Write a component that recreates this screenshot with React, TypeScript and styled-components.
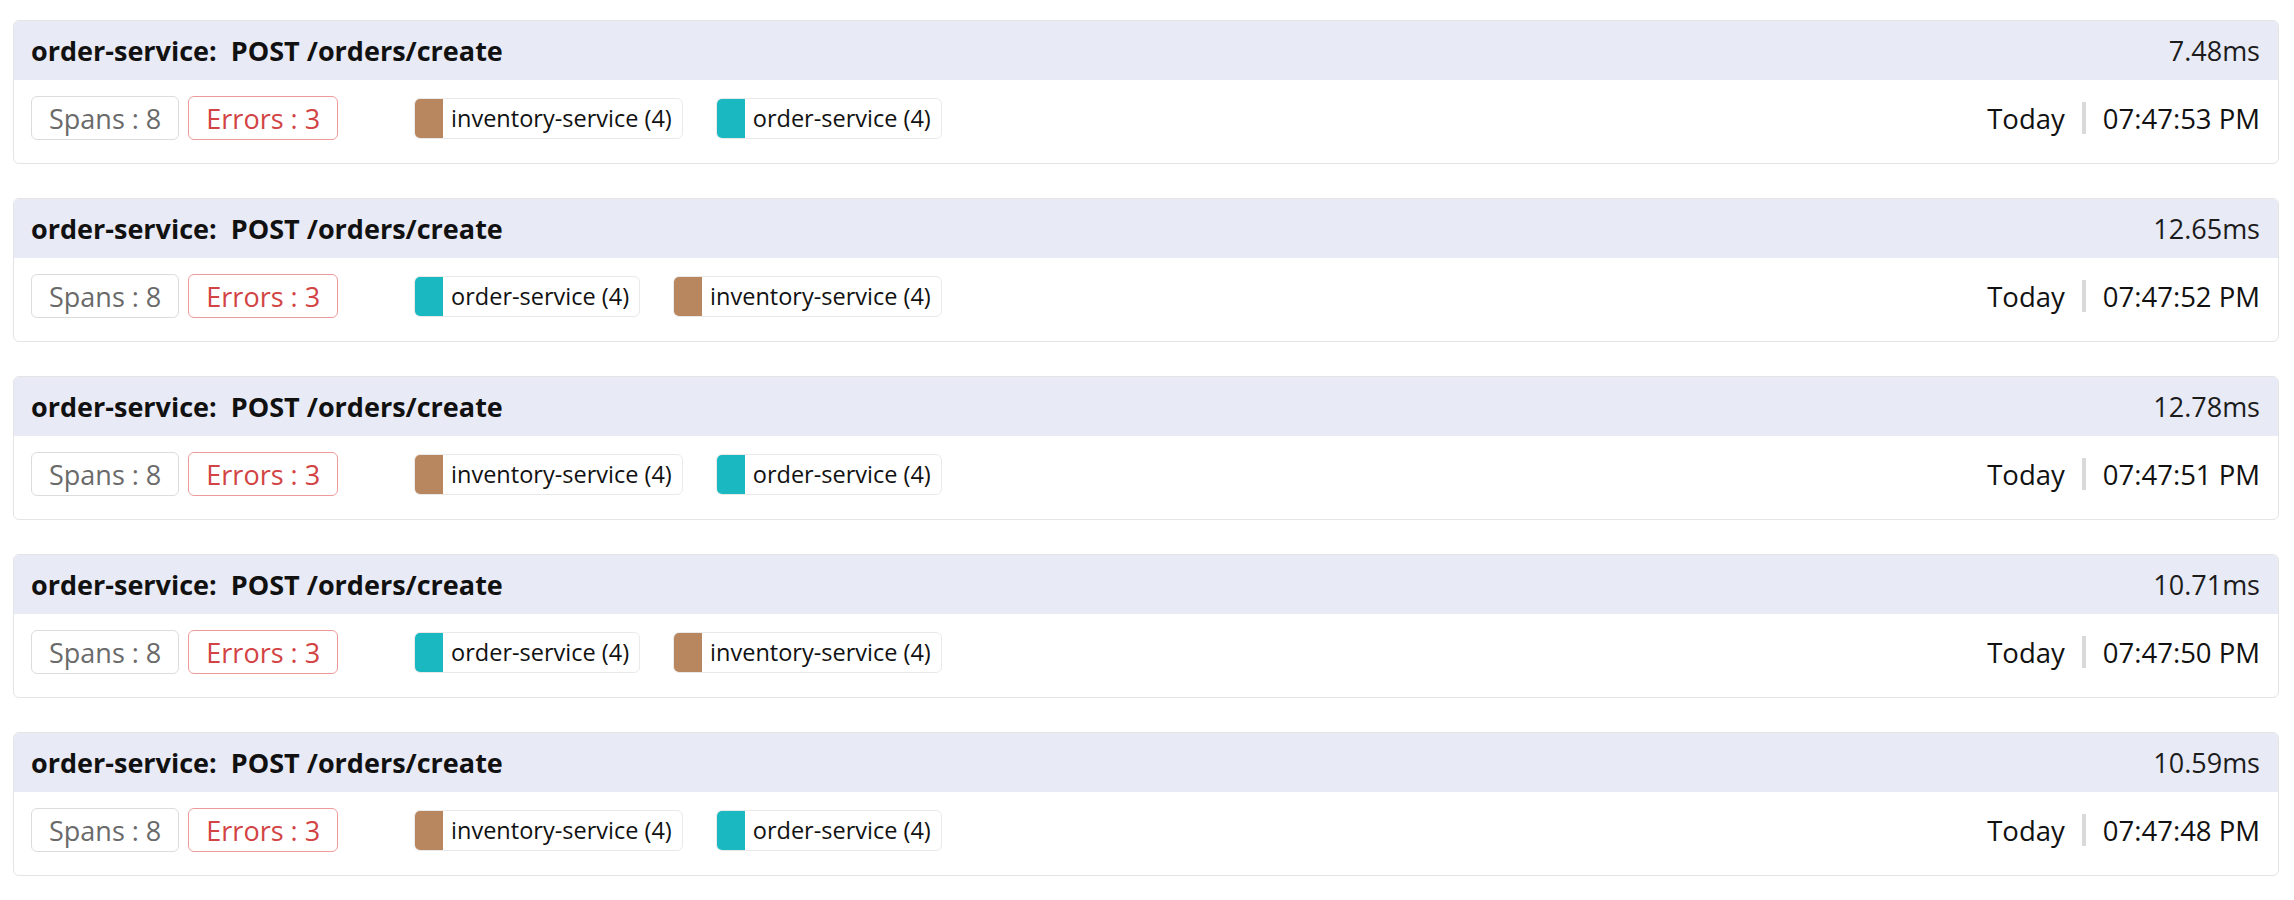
import React from "react";
import styled, { createGlobalStyle } from "styled-components";

const GlobalStyle = createGlobalStyle`
  html, body {
    margin: 0;
    padding: 0;
    background: #ffffff;
  }
  body {
    font-family: "Open Sans", "Noto Sans", sans-serif;
    color: #111;
  }
`;

const List = styled.div`
  display: flex;
  flex-direction: column;
  gap: 34px;
  padding: 20px 15px 20px 13px;
`;

const Card = styled.div`
  border: 1px solid #e4e4e4;
  border-radius: 6px;
  overflow: hidden;
  background: #fff;
`;

const Header = styled.div`
  height: 59px;
  background: #e8eaf5;
  display: flex;
  align-items: center;
  justify-content: space-between;
  padding: 0 18px 0 17px;
`;

const Title = styled.div`
  font-size: 27px;
  font-weight: 700;
  color: #111;
  white-space: pre;
`;

const Duration = styled.div`
  font-size: 27px;
  color: #1c1c1c;
`;

const Body = styled.div`
  display: flex;
  align-items: center;
  padding: 16px 18px 23px 17px;
`;

const Badge = styled.div<{ $tone: "neutral" | "error" }>`
  height: 44px;
  box-sizing: border-box;
  display: flex;
  align-items: center;
  padding: 0 17px;
  border-radius: 6px;
  font-size: 27px;
  border: 1.5px solid ${(p) => (p.$tone === "error" ? "#ec9b9b" : "#dcdcdc")};
  color: ${(p) => (p.$tone === "error" ? "#d24343" : "#6a6a6a")};
  & + & {
    margin-left: 9px;
  }
`;

const Chips = styled.div`
  display: flex;
  gap: 33px;
  margin-left: 76px;
`;

const Chip = styled.div`
  height: 41px;
  box-sizing: border-box;
  display: flex;
  align-items: stretch;
  border: 1.5px solid #e9e9e9;
  border-radius: 6px;
  overflow: hidden;
`;

const Swatch = styled.div<{ $color: string }>`
  width: 28px;
  background: ${(p) => p.$color};
`;

const ChipLabel = styled.div`
  display: flex;
  align-items: center;
  padding: 0 10px 0 8px;
  font-size: 23.5px;
  color: #111;
`;

const When = styled.div`
  margin-left: auto;
  display: flex;
  align-items: center;
  gap: 17px;
  font-size: 27.5px;
  color: #111;
`;

const Sep = styled.div`
  width: 4px;
  height: 32px;
  background: #d9d9d9;
`;

const SERVICES: Record<string, string> = {
  "inventory-service": "#b8865f",
  "order-service": "#1ab8c0",
};

type Trace = {
  duration: string;
  services: string[];
  time: string;
};

const traces: Trace[] = [
  { duration: "7.48ms", services: ["inventory-service", "order-service"], time: "07:47:53 PM" },
  { duration: "12.65ms", services: ["order-service", "inventory-service"], time: "07:47:52 PM" },
  { duration: "12.78ms", services: ["inventory-service", "order-service"], time: "07:47:51 PM" },
  { duration: "10.71ms", services: ["order-service", "inventory-service"], time: "07:47:50 PM" },
  { duration: "10.59ms", services: ["inventory-service", "order-service"], time: "07:47:48 PM" },
];

export default function App() {
  return (
    <>
      <GlobalStyle />
      <List>
        {traces.map((t, i) => (
          <Card key={i}>
            <Header>
              <Title>{"order-service:  POST /orders/create"}</Title>
              <Duration>{t.duration}</Duration>
            </Header>
            <Body>
              <Badge $tone="neutral">Spans : 8</Badge>
              <Badge $tone="error">Errors : 3</Badge>
              <Chips>
                {t.services.map((s) => (
                  <Chip key={s}>
                    <Swatch $color={SERVICES[s]} />
                    <ChipLabel>{s} (4)</ChipLabel>
                  </Chip>
                ))}
              </Chips>
              <When>
                <span>Today</span>
                <Sep />
                <span>{t.time}</span>
              </When>
            </Body>
          </Card>
        ))}
      </List>
    </>
  );
}
